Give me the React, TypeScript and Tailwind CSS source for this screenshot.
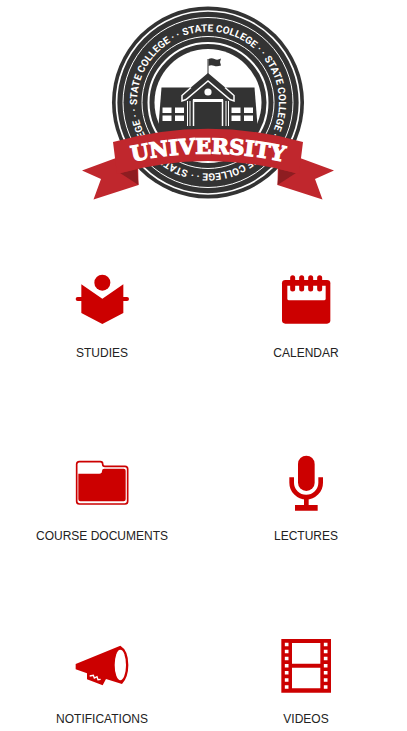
import type { ReactNode } from 'react';

const RED = '#cc0000';
const INK = '#333333';
const RIBBON = '#c0272d';

function RibbonTail() {
  return (
    <>
      <path d="M278 160 L300 158 L334 170.500 L315 179 L322.500 199.500 L277.500 185 Z" fill={RIBBON} />
      <path d="M279 169 L296 173 L277.500 185 Z" fill="#8e1d21" />
    </>
  );
}

function Crest() {
  return (
    <svg viewBox="78 0 260 207" className="w-[260px]" role="img" aria-label="State College University">
      <defs>
        <path id="ring-line" d="M208 31.500 A71 71 0 0 1 208 173.500 A71 71 0 0 1 208 31.500" />
        <path id="ribbon-line" d="M118 165 Q208 142 298 165" />
      </defs>
      <circle cx="208" cy="102.500" r="96" fill={INK} />
      <g fill="none" stroke="#ffffff">
        <circle cx="208" cy="102.500" r="91.500" strokeWidth="1.700" />
        <circle cx="208" cy="102.500" r="85" strokeWidth="1" />
        <circle cx="208" cy="102.500" r="66" strokeWidth="1" />
        <circle cx="208" cy="102.500" r="59.500" strokeWidth="2" />
      </g>
      <circle cx="208" cy="102.500" r="53.500" fill="#ffffff" />
      {[-20, 52, 124, 196, 268].map((angle) => (
        <text
          key={angle}
          transform={`rotate(${angle} 208 102.5)`}
          fill="#ffffff"
          className="font-[Roboto,sans-serif] text-[10px] font-bold"
        >
          <textPath href="#ring-line">STATE COLLEGE · ·</textPath>
        </text>
      ))}

      <path d="M207.500 59 H208.500 V76 H207.500 Z" fill={INK} />
      <path d="M208.500 59 Q211.500 57.500 214.500 59 T221 58.500 L220 62 L221 65.500 Q217 67 214 65.800 T208.500 66 Z" fill={INK} />
      <path d="M161.500 87.500 H254.500 L258 132 H158 Z" fill={INK} />
      <path d="M208 73 L236.500 97 L234 102 V132 H182 V102 L179.500 97 Z" fill={INK} />
      <path d="M191 87.500 L182 95.500 V101 L186 99.500 L208 81 L230 99.500 L234 101 V95.500 L225 87.500" fill="none" stroke="#ffffff" strokeWidth="1.500" />
      <path d="M187.500 101 V126 M190 101 V126 M226 101 V126 M228.500 101 V126" stroke="#ffffff" strokeWidth="1" />
      <path d="M193.500 126 V100.500 H222.500 V126" fill="none" stroke="#ffffff" strokeWidth="1.500" />
      <path d="M193 99 H223 V102 H193 Z" fill="#ffffff" />
      <circle cx="208" cy="92" r="3.600" fill="#ffffff" />
      <path d="M162.500 107.500h9v5.500h-9z M175 107.500h9v5.500h-9z M162.500 115.500h9v5.500h-9z M175 115.500h9v5.500h-9z M231.500 107.500h9v5.500h-9z M244 107.500h9v5.500h-9z M231.500 115.500h9v5.500h-9z M244 115.500h9v5.500h-9z" fill="#ffffff" />

      <RibbonTail />
      <g transform="translate(416 0) scale(-1 1)">
        <RibbonTail />
      </g>
      <path d="M113 142 Q208 115.500 303 142 L299 174 Q208 148 117 174 Z" fill={RIBBON} />
      <text
        fill="#ffffff"
        stroke="#ffffff"
        strokeWidth="1.200"
        textAnchor="middle"
        className="font-['DejaVu_Serif',serif] text-[21px] font-bold"
      >
        <textPath href="#ribbon-line" startOffset="50%">
          UNIVERSITY
        </textPath>
      </text>
    </svg>
  );
}

type Tile = { label: string; viewBox: string; icon: ReactNode };

const tiles: Tile[] = [
  {
    label: 'STUDIES',
    viewBox: '43 36 162 162',
    icon: (
      <>
        <circle cx="125" cy="65" r="24" fill={RED} />
        <path d="M62 70 L125 113 L188 70 V156 L125 189 L62 156 Z" fill={RED} />
        <path d="M51 114 H70 M180 114 H199" stroke={RED} strokeWidth="12" strokeLinecap="round" />
      </>
    ),
  },
  {
    label: 'CALENDAR',
    viewBox: '46 36 162 162',
    icon: (
      <>
        <rect x="55" y="57" width="145" height="131" rx="10" fill={RED} />
        <path d="M71 74 H186 V113 Q186 118 181 118 H76 Q71 118 71 113 Z" fill="#ffffff" />
        <path d="M87 50 V84 M114 50 V84 M141 50 V84 M168 50 V84" stroke={RED} strokeWidth="15" strokeLinecap="round" />
      </>
    ),
  },
  {
    label: 'COURSE DOCUMENTS',
    viewBox: '133 16 162 162',
    icon: (
      <>
        <path
          d="M146 33 H209 Q216 33 216 40 Q216 47 223 47 H283 Q291 47 291 55 V152 Q291 160 283 160 H146 Q138 160 138 152 V41 Q138 33 146 33 Z"
          fill="#ffffff"
          stroke={RED}
          strokeWidth="5"
        />
        <path d="M143 69 H206 Q214 69 214 61 Q214 54 221 54 H279 Q285 54 285 60 V146 Q285 152 279 152 H149 Q143 152 143 146 Z" fill={RED} />
      </>
    ),
  },
  {
    label: 'LECTURES',
    viewBox: '46 31 162 162',
    icon: (
      <>
        <rect x="103" y="30" width="50" height="106" rx="25" fill={RED} />
        <path d="M84 95 V111 A43.500 43.500 0 0 0 171 111 V95" fill="none" stroke={RED} strokeWidth="14" />
        <path d="M121 156 H135 V178 H162 V195 H94 V178 H121 Z" fill={RED} />
      </>
    ),
  },
  {
    label: 'NOTIFICATIONS',
    viewBox: '73 27 162 162',
    icon: (
      <>
        <path d="M75 102 L209 47 Q233 61 233 105 Q233 142 214 162 L166 147 L156 166 L109 148 V130 L75 118 Z" fill={RED} />
        <ellipse cx="209" cy="105" rx="17" ry="46" fill="#ffffff" />
        <path d="M117 138 L128 136 L131 144 L139 140 L142 149 L150 148" fill="none" stroke="#ffffff" strokeWidth="4" />
      </>
    ),
  },
  {
    label: 'VIDEOS',
    viewBox: '46 27 162 162',
    icon: (
      <>
        <path d="M53 27 H202 V188 H53 Z" fill={RED} />
        <path d="M85 39 H170 V101 H85 Z M85 113 H170 V175 H85 Z" fill="#ffffff" />
        <path d="M69 38 V178 M186 38 V178" stroke="#ffffff" strokeWidth="11" strokeDasharray="10.500 10.800" />
      </>
    ),
  },
];

export default function App() {
  return (
    <main className="bg-white font-['Liberation_Sans',Arial,sans-serif] text-[#222222]">
      <header className="flex justify-center pl-2">
        <Crest />
      </header>
      <nav className="mt-[66px] grid grid-cols-2 gap-x-0.5 gap-y-[93px] pl-px">
        {tiles.map((tile) => (
          <a key={tile.label} href="#" className="flex flex-col items-center gap-4">
            <svg viewBox={tile.viewBox} className="size-[54px] overflow-visible" aria-hidden="true">
              {tile.icon}
            </svg>
            <span className="text-xs leading-5">{tile.label}</span>
          </a>
        ))}
      </nav>
    </main>
  );
}
